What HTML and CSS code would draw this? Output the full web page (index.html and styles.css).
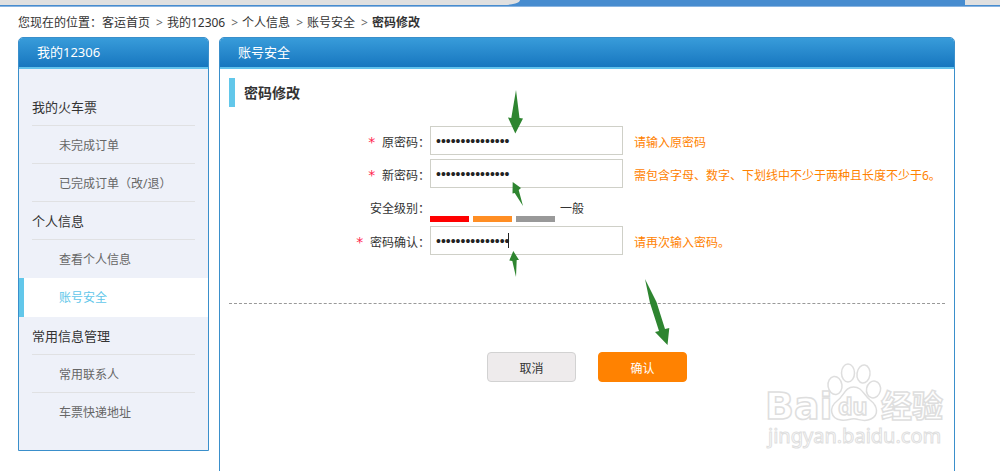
FILE: index.html
```html
<!DOCTYPE html>
<html lang="zh-CN">
<head>
    <meta charset="UTF-8">
    <meta name="viewport" content="width=device-width, initial-scale=1.0">
    <title>密码修改</title>
    <link rel="stylesheet" href="styles.css">
</head>
<body>
    <div class="page">
        <div class="topbar">
            <div class="topbar-left"></div>
            <div class="topbar-right"></div>
        </div>

        <nav class="crumbs">
            <span>您现在的位置：</span>
            <a href="#">客运首页</a>
            <a href="#" class="crumb">我的12306</a>
            <a href="#" class="crumb">个人信息</a>
            <a href="#" class="crumb">账号安全</a>
            <strong class="crumb">密码修改</strong>
        </nav>

        <div class="layout">
            <!-- 左侧菜单 -->
            <aside class="panel sidebar">
                <h2 class="panel-head">我的12306</h2>
                <ul class="menu">
                    <li class="menu-title">我的火车票</li>
                    <li><a href="#">未完成订单</a></li>
                    <li><a href="#">已完成订单（改/退）</a></li>
                    <li class="menu-title">个人信息</li>
                    <li class="no-line"><a href="#">查看个人信息</a></li>
                    <li class="active"><a href="#">账号安全</a></li>
                    <li class="menu-title">常用信息管理</li>
                    <li><a href="#">常用联系人</a></li>
                    <li class="no-line"><a href="#">车票快递地址</a></li>
                </ul>
            </aside>

            <!-- 密码修改 -->
            <main class="panel main">
                <h2 class="panel-head">账号安全</h2>
                <form class="pwd-form">
                    <h3 class="form-title">密码修改</h3>
                    <div class="fields">
                        <div class="row">
                            <label for="old-pwd"><span class="star">*</span>原密码：</label>
                            <input type="password" id="old-pwd" value="abcdefgh1234567">
                            <span class="hint">请输入原密码</span>
                        </div>
                        <div class="row">
                            <label for="new-pwd"><span class="star">*</span>新密码：</label>
                            <input type="password" id="new-pwd" value="abcdefgh1234567">
                            <span class="hint">需包含字母、数字、下划线中不少于两种且长度不少于6。</span>
                        </div>
                        <div class="row level-row">
                            <span class="label">安全级别：</span>
                            <div class="levels">
                                <span class="level low"></span>
                                <span class="level mid"></span>
                                <span class="level high"></span>
                            </div>
                            <span class="level-text">一般</span>
                        </div>
                        <div class="row">
                            <label for="re-pwd"><span class="star">*</span>密码确认：</label>
                            <div class="caret-box">
                                <input type="password" id="re-pwd" value="abcdefgh1234567">
                                <span class="caret"></span>
                            </div>
                            <span class="hint">请再次输入密码。</span>
                        </div>
                    </div>
                    <div class="buttons">
                        <button type="button" class="btn">取消</button>
                        <button type="submit" class="btn btn-ok">确认</button>
                    </div>
                </form>
            </main>
        </div>

        <!-- 箭头标注 -->
        <svg class="arrows" width="1000" height="471" viewBox="0 0 1000 471" aria-hidden="true">
            <path d="M516 90 L519.500 118 L523 118.500 L515.300 133.500 L508 117.500 L511.300 118 Z"/>
            <path d="M512.700 182 L521 188 L518.700 190 L523 206 L514.700 193 L512.500 193.500 Z"/>
            <path d="M513.300 251 L519 260 L516.700 260 L516 277 L512.300 261 L509.300 260.500 Z"/>
            <path d="M645 279 L656.500 302 L665 329 L669.300 328 L667.500 345 L655 332 L659 331 L650 303 Z"/>
        </svg>

        <!-- 水印 -->
        <svg class="watermark" width="190" height="95" viewBox="760 358 190 95">
            <text class="wm-text wm-logo" x="765" y="419">Bai</text>
            <g class="wm-shape">
                <ellipse cx="835" cy="385.500" rx="7" ry="9" transform="rotate(-8 835 385.500)"/>
                <ellipse cx="848" cy="373" rx="6.500" ry="9"/>
                <ellipse cx="863.500" cy="374" rx="6.500" ry="9" transform="rotate(8 863.500 374)"/>
                <ellipse cx="873.500" cy="389.500" rx="7" ry="8.500" transform="rotate(12 873.500 389.500)"/>
                <path d="M853.500 387 C845 387 844 396 837 401 C828 408 831 419 841 420 C848 421 850 418 856 419 C861 420 865 422 871 419 C879 415 878 406 870 400 C863 394 862 387 853.500 387 Z"/>
            </g>
            <text class="wm-text wm-du" x="838" y="415">du</text>
            <text class="wm-text wm-cn" x="881" y="417">经验</text>
            <text class="wm-text wm-url" x="768" y="443">jingyan.baidu.com</text>
        </svg>
    </div>
</body>
</html>
```
FILE: styles.css
```css
* {
    box-sizing: border-box;
}
body {
    margin: 0;
    background: #fff;
    color: #333;
    font-family: "Noto Sans", "Noto Sans CJK SC", sans-serif;
    font-size: 12px;
    line-height: 18px;
}
a {
    color: inherit;
    text-decoration: none;
}
h2, h3, ul {
    margin: 0;
    padding: 0;
}
.page {
    position: relative;
    height: 100vh;
    overflow: hidden;
}

/* 顶部 */
.topbar {
    display: flex;
    justify-content: space-between;
    height: 7px;
    background: #478ccf;
    border-bottom: 1px solid #8ab4e0;
}
.topbar-left {
    width: 52%;
    height: 5px;
    background: #e0e0e0;
    border-bottom-right-radius: 16px 5px;
}
.topbar-right {
    width: 35px;
    height: 5px;
    background: #e0e0e0;
}

/* 当前位置 */
.crumbs {
    display: flex;
    padding: 7px 18px 5px;
}
.crumb::before {
    content: ">";
    margin: 0 4px 0 6px;
    font-weight: normal;
    color: #666;
}

.layout {
    display: flex;
    align-items: flex-start;
    gap: 10px;
    padding: 0 45px 0 18px;
}
.panel {
    border: 1px solid #3a8fcb;
    border-radius: 5px 5px 0 0;
}
.panel-head {
    height: 31px;
    padding-left: 18px;
    border-bottom: 2px solid #62c2ec;
    border-radius: 4px 4px 0 0;
    background: linear-gradient(#389cda, #1776bf);
    color: #fff;
    font-size: 13px;
    font-weight: normal;
    line-height: 29px;
}

/* 左侧菜单 */
.sidebar {
    width: 191px;
    flex: none;
    background: #eef1f9;
}
.menu {
    padding: 19px 0;
    list-style: none;
}
.menu li {
    height: 38px;
    margin: 0 13px;
    padding-left: 27px;
    border-bottom: 1px solid #e0e1e3;
    color: #666;
    line-height: 40px;
}
.menu .menu-title {
    padding-left: 0;
    color: #333;
    font-size: 13px;
    line-height: 38px;
}
.menu .no-line {
    border-bottom: none;
}
.menu .active {
    height: 39px;
    margin: 0;
    padding-left: 35px;
    border-bottom: none;
    border-left: 5px solid #62c7ea;
    background: #fff;
    color: #62c7ea;
}

/* 表单 */
.main {
    flex: 1;
    min-width: 0;
}
.pwd-form {
    padding: 9px 9px 120px;
}
.form-title {
    padding-left: 9px;
    border-left: 6px solid #62c7ea;
    font-size: 14px;
    line-height: 29px;
}
.fields {
    display: flex;
    flex-direction: column;
    gap: 4px;
    padding: 19px 0 48px;
    border-bottom: 1px dashed #999;
}
.row {
    display: flex;
    align-items: center;
    height: 29px;
    line-height: 29px;
}
.row label,
.row .label {
    width: 201px;
    padding-top: 3px;
    text-align: right;
}
.star {
    margin-right: 6px;
    color: #ff1f4f;
    font-family: "DejaVu Sans Mono", monospace;
    font-size: 14px;
    line-height: 14px;
}
.row input {
    display: block;
    width: 193px;
    height: 29px;
    padding: 0 5px;
    border: 1px solid #cfd0c8;
    background: #fff;
    color: #222;
    font-family: "Liberation Sans", Arial, sans-serif;
    font-size: 14px;
    outline: none;
}
.hint {
    margin-left: 11px;
    padding-top: 3px;
    color: #ff8201;
    white-space: nowrap;
}
.level-row {
    height: 30px;
}
.levels {
    display: flex;
    align-self: flex-end;
    gap: 4px;
}
.level {
    width: 39px;
    height: 6px;
}
.low {
    background: #f00;
}
.mid {
    background: #ff8e24;
}
.high {
    background: #999;
}
.level-text {
    margin-left: 5px;
    padding-top: 3px;
}
.caret-box {
    position: relative;
}
.caret {
    position: absolute;
    left: 78px;
    top: 7px;
    width: 1px;
    height: 15px;
    background: #222;
}

.buttons {
    display: flex;
    justify-content: center;
    gap: 22px;
    padding-top: 48px;
}
.btn {
    width: 89px;
    height: 30px;
    padding: 2px 0 0;
    border: 1px solid #d2d2d2;
    border-radius: 4px;
    background: #eeebec;
    color: #333;
    font-family: inherit;
    font-size: 12px;
    cursor: pointer;
}
.btn-ok {
    border-color: #ff8201;
    background: #ff8201;
    color: #fff;
}

/* 箭头和水印浮在内容上方 */
.arrows {
    position: absolute;
    left: 0;
    top: 0;
    fill: #2e8530;
    pointer-events: none;
}
.watermark {
    position: absolute;
    right: 50px;
    bottom: 18px;
    pointer-events: none;
}
.wm-shape,
.wm-text {
    fill: #fff;
    stroke: #dedede;
    stroke-width: 1.5;
}
.wm-text {
    font-family: "Noto Sans", "Noto Sans CJK SC", sans-serif;
    font-weight: bold;
}
.wm-logo {
    font-family: "DejaVu Sans", sans-serif;
    font-size: 38px;
}
.wm-du {
    font-size: 23px;
}
.wm-cn {
    font-size: 31px;
}
.wm-url {
    font-size: 20px;
    font-weight: normal;
    stroke-width: 1;
}
```
